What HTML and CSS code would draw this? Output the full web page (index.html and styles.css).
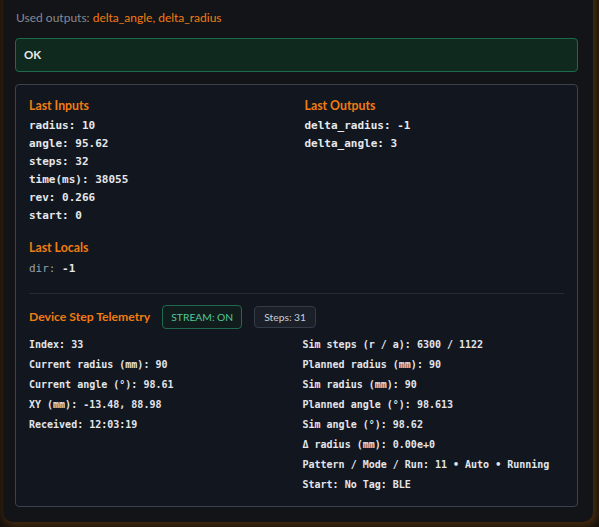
FILE: index.html
```html
<!DOCTYPE html>
<html>
<head>
<meta charset="utf-8">
<link rel="stylesheet" href="styles.css">
</head>
<body>
<div class="panel">
  <div class="used">Used outputs: <span class="accent">delta_angle, delta_radius</span></div>
  <div class="ok">OK</div>
  <div class="card">
    <div class="grid2">
      <div class="section">
        <div class="heading">Last Inputs</div>
        <div class="kv">radius: 10</div>
        <div class="kv">angle: 95.62</div>
        <div class="kv">steps: 32</div>
        <div class="kv">time(ms): 38055</div>
        <div class="kv">rev: 0.266</div>
        <div class="kv">start: 0</div>
      </div>
      <div class="section">
        <div class="heading">Last Outputs</div>
        <div class="kv">delta_radius: -1</div>
        <div class="kv">delta_angle: 3</div>
      </div>
    </div>
    <div class="section locals">
      <div class="heading">Last Locals</div>
      <div class="kv"><span class="key">dir:</span> -1</div>
    </div>
    <div class="sep"></div>
    <div class="telehead">
      <div class="heading">Device Step Telemetry</div>
      <span class="badge badge-on">STREAM: ON</span>
      <span class="badge badge-steps">Steps: 31</span>
    </div>
    <div class="tgrid">
      <div class="tcol">
        <div class="trow">Index: 33</div>
        <div class="trow">Current radius (mm): 90</div>
        <div class="trow">Current angle (°): 98.61</div>
        <div class="trow">XY (mm): -13.48, 88.98</div>
        <div class="trow">Received: 12:03:19</div>
      </div>
      <div class="tcol">
        <div class="trow">Sim steps (r / a): 6300 / 1122</div>
        <div class="trow">Planned radius (mm): 90</div>
        <div class="trow">Sim radius (mm): 90</div>
        <div class="trow">Planned angle (°): 98.613</div>
        <div class="trow">Sim angle (°): 98.62</div>
        <div class="trow">Δ radius (mm): 0.00e+0</div>
        <div class="trow">Pattern / Mode / Run: 11 • Auto • Running</div>
        <div class="trow">Start: No Tag: BLE</div>
      </div>
    </div>
  </div>
</div>
</body>
</html>
```
FILE: styles.css
```css
html, body {
  margin: 0;
  padding: 0;
}
body {
  background: #17120d;
  width: 599px;
  height: 527px;
  overflow: hidden;
  font-family: Lato, "Noto Sans", sans-serif;
}
.panel {
  margin: -20px 6px 0 3px;
  padding: 30px 15px 15px 12px;
  background: #131418;
  border-radius: 0 0 10px 10px;
  box-shadow: 2px 2px 8px 1px rgba(190, 105, 20, 0.32);
}
.used {
  font-size: 12px;
  line-height: 16px;
  color: #858a94;
  margin-left: 1px;
}
.accent {
  color: #f07c12;
}
.ok {
  margin-top: 12px;
  border: 1px solid #1d6b4b;
  background: #10291f;
  border-radius: 4px;
  padding: 9px 8px;
  font-size: 11.5px;
  line-height: 14px;
  font-weight: 700;
  color: #e8ece9;
}
.card {
  margin-top: 12px;
  border: 1px solid #3a4250;
  background: #12161e;
  border-radius: 4px;
  padding: 13px 13px 11px 13px;
}
.grid2 {
  display: grid;
  grid-template-columns: 1fr 1fr;
  column-gap: 16px;
}
.heading {
  font-size: 12.3px;
  line-height: 16px;
  font-weight: 700;
  color: #f07c12;
  margin-bottom: 3px;
}
.kv {
  font-family: "DejaVu Sans Mono", "Liberation Mono", monospace;
  font-size: 11px;
  line-height: 18px;
  font-weight: 700;
  color: #e6e8ec;
}
.key {
  font-weight: 400;
  color: #9aa0aa;
}
.locals {
  margin-top: 15px;
}
.locals .heading {
  margin-bottom: 4px;
}
.sep {
  margin-top: 15px;
  height: 1px;
  background: #262c36;
}
.telehead {
  margin-top: 11px;
  display: flex;
  align-items: center;
  gap: 12px;
}
.telehead .heading {
  margin-bottom: 0;
  font-size: 12.2px;
}
.badge {
  font-size: 10.3px;
  border-radius: 4px;
  box-sizing: border-box;
}
.badge-on {
  height: 24px;
  line-height: 22px;
  padding: 0 8px;
  border: 1px solid #1f6a50;
  background: #101d1c;
  color: #55c79a;
}
.badge-steps {
  height: 22px;
  line-height: 20px;
  padding: 0 9px;
  border: 1px solid #343b47;
  background: #1a1f28;
  color: #c9cdd4;
}
.tgrid {
  margin-top: 6px;
  display: grid;
  grid-template-columns: 1fr 1fr;
  column-gap: 12px;
}
.trow {
  font-family: "DejaVu Sans Mono", "Liberation Mono", monospace;
  font-size: 10px;
  line-height: 20px;
  font-weight: 700;
  color: #e2e5ea;
  white-space: nowrap;
}
```
